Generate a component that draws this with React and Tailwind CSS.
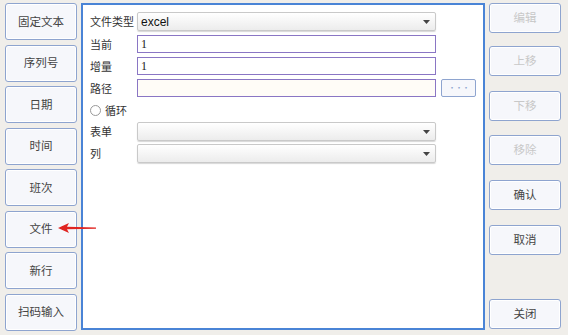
import React from "react";

const leftItems = ["固定文本", "序列号", "日期", "时间", "班次", "文件", "新行", "扫码输入"];

function SideButton({ label, disabled, className = "" }) {
  return (
    <button
      className={`w-[72px] rounded-[3px] border border-[#8ea4cf] bg-[#f6f7fb] text-[11.5px] shadow-[inset_0_0_0_1px_#ffffff] ${
        disabled ? "text-[#c8c8c8]" : "text-[#444]"
      } ${className}`}
    >
      {label}
    </button>
  );
}

function Select({ value }) {
  return (
    <div className="flex h-[19px] w-[299px] items-center justify-between rounded-[2px] border border-[#c9c9c9] bg-gradient-to-b from-[#ffffff] to-[#ececec] pl-[3px] pr-[5px] shadow-[0_1px_1px_#d8d8d8]">
      <span className="font-['Liberation_Sans',sans-serif] text-[12px] text-[#111]">{value}</span>
      <svg width="7" height="4" viewBox="0 0 7 4">
        <path d="M0 0h7L3.5 4z" fill="#444" />
      </svg>
    </div>
  );
}

function Input({ value, bg = "bg-white" }) {
  return (
    <div className={`flex h-[18px] w-[299px] items-center border border-[#8a76c4] ${bg} pl-[3px] font-['Liberation_Serif',serif] text-[12px] text-[#222]`}>
      {value}
    </div>
  );
}

function Row({ label, children, className = "" }) {
  return (
    <div className={`flex items-center ${className}`}>
      <span className="w-[47px] shrink-0 whitespace-nowrap text-[11px] text-[#333]">{label}</span>
      {children}
    </div>
  );
}

export default function App() {
  return (
    <div className="relative flex h-[335px] w-[568px] bg-[#f0eeea] font-['Noto_Sans_CJK_SC',sans-serif]">
      <div className="ml-[5px] mt-[3px] flex flex-col gap-[4.5px]">
        {leftItems.map((t) => (
          <SideButton key={t} label={t} className="h-[37px]" />
        ))}
      </div>

      <div className="ml-[4px] mt-[3px] h-[327px] w-[404px] border-2 border-[#4a84d6] bg-white pl-[7px] pt-[7px]">
        <Row label="文件类型">
          <Select value="excel" />
        </Row>
        <Row label="当前" className="mt-[4px]">
          <Input value="1" />
        </Row>
        <Row label="增量" className="mt-[4px]">
          <Input value="1" />
        </Row>
        <Row label="路径" className="mt-[4px]">
          <Input value="" bg="bg-[#fffcf7]" />
          <div className="ml-[5px] flex h-[18px] w-[35px] items-center justify-center rounded-[2px] border border-[#8ea4cf] bg-[#f6f7fb] text-[8px] leading-none tracking-[-1px] text-[#8ea4cf]">
            ···
          </div>
        </Row>
        <div className="mt-[5px] flex h-[16px] items-center">
          <span className="mr-[4px] h-[11px] w-[11px] rounded-full border border-[#999] bg-white" />
          <span className="text-[11px] text-[#333]">循环</span>
        </div>
        <Row label="表单" className="mt-[4px]">
          <Select value="" />
        </Row>
        <Row label="列" className="mt-[3px]">
          <Select value="" />
        </Row>
      </div>

      <div className="ml-[4px] mt-[3px] flex flex-col">
        <SideButton label="编辑" disabled className="h-[30px]" />
        <SideButton label="上移" disabled className="mt-[13px] h-[30px]" />
        <SideButton label="下移" disabled className="mt-[15px] h-[30px]" />
        <SideButton label="移除" disabled className="mt-[14px] h-[30px]" />
        <SideButton label="确认" className="mt-[15px] h-[30px]" />
        <SideButton label="取消" className="mt-[15px] h-[30px]" />
        <SideButton label="关闭" className="mt-[44px] h-[30px]" />
      </div>

      <svg className="absolute left-[57px] top-[222px]" width="40" height="12" viewBox="0 0 40 12">
        <path d="M1 6 L12 1 L10 4.8 L39 5.4 L39 6.8 L10 7.2 L12 11 Z" fill="#e02420" />
      </svg>
    </div>
  );
}
